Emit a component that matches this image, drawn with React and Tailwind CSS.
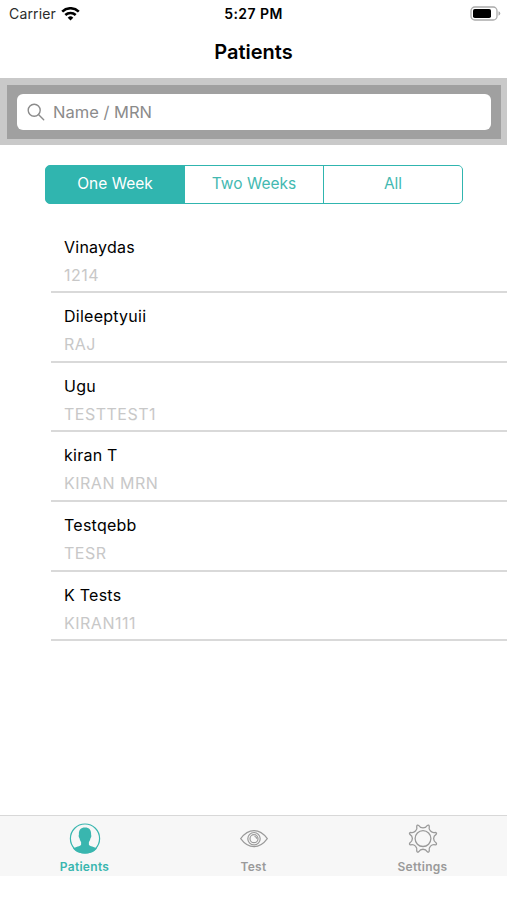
import React, { useState } from "react";

const patients = [
  { name: "Vinaydas", mrn: "1214" },
  { name: "Dileeptyuii", mrn: "RAJ" },
  { name: "Ugu", mrn: "TESTTEST1" },
  { name: "kiran T", mrn: "KIRAN MRN" },
  { name: "Testqebb", mrn: "TESR" },
  { name: "K Tests", mrn: "KIRAN111" },
];

const ranges = ["One Week", "Two Weeks", "All"];

export default function App() {
  const [range, setRange] = useState("One Week");
  const [tab, setTab] = useState("Patients");
  const [query, setQuery] = useState("");

  const visible = patients.filter((p) =>
    `${p.name} ${p.mrn}`.toLowerCase().includes(query.toLowerCase())
  );

  return (
    <div className="flex h-[900px] w-[507px] flex-col overflow-hidden bg-white font-['Inter',sans-serif] text-black">
      <StatusBar />
      <h1 className="h-[51px] pt-[11px] text-center text-[20px] leading-[28px] font-semibold">
        Patients
      </h1>

      <div className="h-[67px] bg-[#c9c9c9] pt-[7px] pr-[6px] pl-[7px]">
        <div className="h-[54px] bg-[#a0a0a0] px-[10px] pt-[9px]">
          <label className="flex h-[36px] items-center rounded-[6px] bg-white pl-[10px]">
            <SearchIcon />
            <input
              value={query}
              onChange={(e) => setQuery(e.target.value)}
              placeholder="Name / MRN"
              className="ml-[8px] flex-1 text-[16.5px] outline-none placeholder:text-[#8b8b8b]"
            />
          </label>
        </div>
      </div>

      <div className="mt-[20px] mr-[44px] ml-[45px] flex h-[39px] shrink-0 gap-px overflow-hidden rounded-[5px] border border-[#30b5af] bg-[#30b5af]">
        {ranges.map((r) => (
          <button
            key={r}
            onClick={() => setRange(r)}
            className={`flex-1 pb-px text-[15.5px] ${
              range === r ? "bg-[#30b5af] text-white" : "bg-white text-[#43b9b1]"
            }`}
          >
            {r}
          </button>
        ))}
      </div>

      <ul className="mt-[19.6px] ml-[51px] flex-1">
        {visible.map((p) => (
          <li
            key={p.mrn}
            className="h-[69.6px] border-b-2 border-[#d9d9d9] pt-[9px] pl-[13px] text-[16px]"
          >
            <div className="h-[28px] leading-[28px] tracking-[0.25px]">{p.name}</div>
            <div className="h-[28px] leading-[28px] tracking-[0.5px] text-[#c8c8c8]">{p.mrn}</div>
          </li>
        ))}
      </ul>

      <nav className="mb-[24px] flex h-[61px] shrink-0 border-t border-[#d8d8d8] bg-[#f7f7f7]">
        <Tab label="Patients" active={tab === "Patients"} onClick={setTab}>
          <PatientIcon />
        </Tab>
        <Tab label="Test" active={tab === "Test"} onClick={setTab}>
          <EyeIcon />
        </Tab>
        <Tab label="Settings" active={tab === "Settings"} onClick={setTab}>
          <GearIcon />
        </Tab>
      </nav>
    </div>
  );
}

const StatusBar = () => (
  <div className="grid h-[27px] grid-cols-3 items-center pr-[6px] pl-[9px] text-[13px]">
    <div className="flex items-center gap-[5px]">
      <span className="text-[14px] tracking-[0.15px] text-[#2c2c2c]">Carrier</span>
      <svg width="19" height="14" viewBox="0 0 19 14" fill="none" stroke="#000">
        <path d="M1.2 4.6a12 12 0 0 1 16.6 0" strokeWidth="2.6" />
        <path d="M4.3 8a7.5 7.5 0 0 1 10.4 0" strokeWidth="2.5" />
        <path d="M9.5 13.5 6.7 10.7a4 4 0 0 1 5.6 0z" fill="#000" stroke="none" />
      </svg>
    </div>
    <div className="-ml-[3px] text-center text-[14px] font-semibold tracking-[0.45px]">5:27 PM</div>
    <div className="flex justify-end">
      <svg width="31" height="15" viewBox="0 0 31 15" fill="none">
        <rect x="1" y="1" width="26" height="13" rx="3.8" stroke="#ababab" strokeWidth="1.3" />
        <rect x="3" y="3" width="18" height="9" rx="1.8" fill="#000" />
        <path d="M28.5 5.3q1.8.6 1.8 2.2t-1.8 2.2z" fill="#ababab" />
      </svg>
    </div>
  </div>
);

const Tab = ({ label, active, onClick, children }) => (
  <button
    onClick={() => onClick(label)}
    className={`flex flex-1 flex-col items-center pt-[7px] text-[12px] font-semibold ${
      active ? "text-[#39b6af]" : "text-[#9a9a9a]"
    }`}
  >
    {children}
    <span className="mt-[4px] leading-[16px] tracking-[0.3px]">{label}</span>
  </button>
);

const SearchIcon = () => (
  <svg width="18" height="18" viewBox="0 0 18 18" fill="none" stroke="#8b8b8b" strokeWidth="1.4">
    <circle cx="7.2" cy="7.2" r="6" />
    <path d="m11.5 11.5 5.2 5.2" strokeLinecap="round" />
  </svg>
);

const PatientIcon = () => (
  <svg width="32" height="32" viewBox="0 0 32 32" fill="none">
    <circle cx="16" cy="15.6" r="14.6" stroke="currentColor" strokeWidth="1.2" />
    <path
      d="M16 4.5c-4.3 0-6.3 2.7-6.1 6.5.1 1-.4 1.3-.2 2.5.2 1.1.8 1.5 1 2.4.3 1.4.9 2.2 1.4 3.2v2.6c-.5 1.6-5.6 2.1-8.2 3.7A14.6 14.6 0 0 0 16 30.2a14.6 14.6 0 0 0 12.1-4.8c-2.6-1.6-7.7-2.1-8.2-3.7v-2.6c.5-1 1.1-1.8 1.4-3.2.2-.9.8-1.3 1-2.4.2-1.2-.3-1.5-.2-2.5.2-3.8-1.8-6.5-6.1-6.5z"
      fill="currentColor"
    />
  </svg>
);

const EyeIcon = () => (
  <svg width="32" height="32" viewBox="0 0 32 32" fill="none" stroke="currentColor" strokeWidth="1.2">
    <path d="M2.7 15.7C6.5 10.5 11 7.7 16 7.7S25.5 10.5 29.3 15.7C25.5 20.9 21 23.7 16 23.7S6.5 20.9 2.7 15.7z" />
    <circle cx="16" cy="15.7" r="6.2" />
    <circle cx="16" cy="15.7" r="4" />
    <path d="M16.5 13.5a2.3 2.3 0 0 1 2.2 2.3" />
  </svg>
);

// eight rounded teeth joined by concave scoops
const gearPath = (() => {
  const at = (r, deg) => {
    const a = (deg * Math.PI) / 180;
    return `${(16 + r * Math.sin(a)).toFixed(2)} ${(15.6 - r * Math.cos(a)).toFixed(2)}`;
  };
  let d = `M${at(13.8, -18)}`;
  for (let i = 0; i < 8; i++) {
    const t = i * 45;
    d += `C${at(10.1, t - 14)} ${at(10.1, t + 14)} ${at(13.8, t + 18)}`;
    d += `Q${at(15.4, t + 22.5)} ${at(13.8, t + 27)}`;
  }
  return d + "Z";
})();

const GearIcon = () => (
  <svg width="32" height="32" viewBox="0 0 32 32" fill="none" stroke="currentColor" strokeWidth="1.3">
    <path d={gearPath} strokeLinejoin="round" />
    <circle cx="16" cy="15.6" r="7.9" />
  </svg>
);
